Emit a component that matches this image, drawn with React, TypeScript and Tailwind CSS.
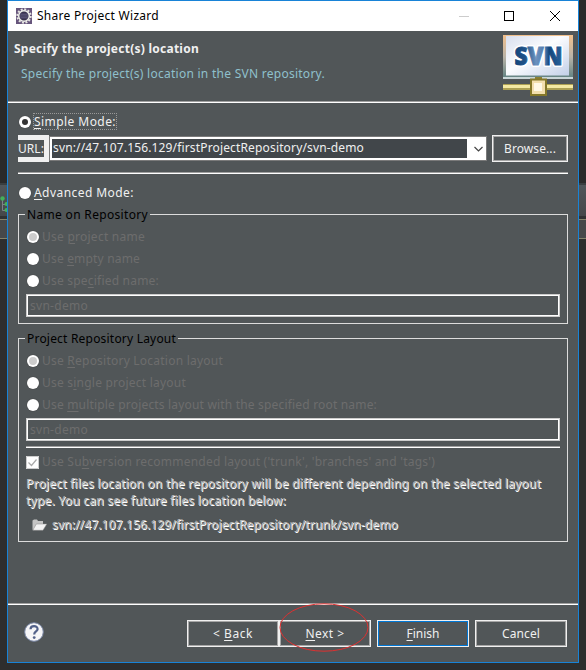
import { useLayoutEffect, useRef, useState } from "react";
import type { ReactNode } from "react";

/* Text run whose tracking is adjusted so that it spans a given width. */
function Fit({ w, className = "", children }: { w: number; className?: string; children: ReactNode }) {
  const ref = useRef<HTMLSpanElement>(null);
  const [tracking, setTracking] = useState(0);
  useLayoutEffect(() => {
    const el = ref.current;
    if (!el) return;
    const chars = (el.textContent ?? "").length;
    setTracking((w - el.getBoundingClientRect().width) / chars);
  }, [w]);
  return (
    <span ref={ref} className={`inline-block whitespace-pre ${className}`} style={{ letterSpacing: tracking }}>
      {children}
    </span>
  );
}

/* Mnemonic letter */
function U({ children }: { children: ReactNode }) {
  return <span className="underline decoration-1 underline-offset-2">{children}</span>;
}

function Rule({ className = "" }: { className?: string }) {
  return <div className={`h-[2px] shrink-0 border-t border-b border-t-[#a0a0a0] border-b-white ${className}`} />;
}

function Radio({ dot = "" }: { dot?: string }) {
  return (
    <span className="flex size-[12px] shrink-0 items-center justify-center rounded-full bg-white shadow-[0_0_1px_#333]">
      {dot && <span className={`rounded-full ${dot}`} />}
    </span>
  );
}

function DisabledRadio({ w, selected, children }: { w: number; selected?: boolean; children: ReactNode }) {
  return (
    <div className="flex h-[22px] items-center gap-[3.5px] pl-[0.5px] text-[#6d6d6d]">
      <Radio dot={selected ? "size-[8px] bg-[#ccc]" : ""} />
      <Fit w={w}>{children}</Fit>
    </div>
  );
}

function DisabledInput() {
  return (
    <div className="flex h-[23px] shrink-0 items-center border border-[#ccc]">
      <div className="flex h-full w-full items-center border border-white pl-[2px] text-[#6d6d6d]">
        <Fit w={58}>svn-demo</Fit>
      </div>
    </div>
  );
}

function Button({ w, className, inner = "border-[#a6a6a6]", children }: { w: number; className: string; inner?: string; children: ReactNode }) {
  return (
    <div className={`h-[27px] shrink-0 border border-[#f0f0f0] ${className}`}>
      <div className={`flex h-full items-center justify-center border ${inner}`}>
        <Fit w={w}>{children}</Fit>
      </div>
    </div>
  );
}

function Gear() {
  return (
    <svg className="size-[16px] shrink-0" viewBox="0 0 16 16">
      <rect width="16" height="16" fill="#66557c" />
      <circle cx="8" cy="8" r="6.700" fill="none" stroke="#e6e6e2" strokeWidth="2" strokeDasharray="2 1.508" />
      <circle cx="8" cy="8" r="5.300" fill="#39324f" stroke="#f0f0ec" strokeWidth="1.500" />
      <path d="M4.300 6.200h7.400M3.800 8h8.400M4.300 9.800h7.400" stroke="#6d6890" strokeWidth=".8" />
    </svg>
  );
}

function SvnLogo() {
  return (
    <svg className="h-[61px] w-[70px]" viewBox="0 0 70 61">
      <defs>
        <linearGradient id="frame" x1="0" y1="0" x2="0" y2="1">
          <stop offset="0" stopColor="#f2c08c" />
          <stop offset=".5" stopColor="#b9b3a8" />
          <stop offset="1" stopColor="#5d8080" />
        </linearGradient>
        <linearGradient id="screen" x1="0" y1="0" x2="1" y2="1">
          <stop offset="0" stopColor="#d9dfee" />
          <stop offset=".45" stopColor="#fbfcfe" />
          <stop offset="1" stopColor="#c3d0e8" />
        </linearGradient>
        <linearGradient id="ink" x1="0" y1="0" x2="1" y2="0">
          <stop offset="0" stopColor="#14467c" />
          <stop offset=".22" stopColor="#1f5288" />
          <stop offset=".45" stopColor="#6c92be" />
          <stop offset=".64" stopColor="#4f79ac" />
          <stop offset=".72" stopColor="#14467c" />
          <stop offset="1" stopColor="#2a639c" />
        </linearGradient>
      </defs>
      <rect width="70" height="44" fill="url(#frame)" />
      <rect x="0" y="42" width="70" height="2" fill="#c9d6d8" />
      <rect x="3" y="1" width="63" height="39.500" fill="url(#screen)" />
      <g fontFamily="Open Sans, Noto Sans, sans-serif" fontWeight="800" fontSize="24">
        <text x="35.500" y="30" textAnchor="middle" textLength="48" lengthAdjust="spacingAndGlyphs" fill="#fff" stroke="#fff" strokeWidth="4" strokeLinejoin="round">SVN</text>
        <text x="35.500" y="30" textAnchor="middle" textLength="48" lengthAdjust="spacingAndGlyphs" fill="url(#ink)" stroke="url(#ink)" strokeWidth=".9">SVN</text>
      </g>
      <rect x="32" y="42" width="7" height="3" fill="#8b8134" />
      <rect x="0" y="49" width="70" height="6" fill="#ada053" />
      <rect x="0" y="50" width="70" height="3" fill="#f5e9a2" />
      <rect x="28" y="44.500" width="15" height="15.500" fill="#f3dfae" stroke="#85782a" strokeWidth="2" />
      <rect x="31" y="48" width="8" height="8" fill="#fff8e6" />
    </svg>
  );
}

const embossed = "text-[#b4b4b4] [text-shadow:1px_1px_0_#fff]";

function EditorStrip({ tree }: { tree?: boolean }) {
  return (
    <div className="flex flex-1 flex-col overflow-hidden">
      <div className="h-[183px] shrink-0 bg-[#2a2a2a]" />
      <div className="h-[2px] shrink-0 bg-[#393e40]" />
      <div className="h-[31px] shrink-0 bg-gradient-to-b from-[#50565a] to-[#45484a]">
        {tree && (
          <svg className="mt-[11px] h-[18px] w-[7px]" viewBox="0 0 7 18">
            <path d="M2.500 3v11.500H7M2.500 8.500H7" fill="none" stroke="#7d8288" />
            <circle cx="2.500" cy="2.500" r="2.200" fill="#43b05a" />
            <circle cx="6.500" cy="8" r="2" fill="#43b05a" />
            <circle cx="6.500" cy="14" r="2" fill="#43b05a" />
          </svg>
        )}
      </div>
      <div className="h-[3px] shrink-0 bg-[#303233]" />
      <div className="h-[20px] shrink-0 border-y border-[#84836b] bg-[#46484a]" />
      <div className="flex-1 bg-[#2e2e2e]" />
    </div>
  );
}

export default function App() {
  return (
    <div className="flex h-[670px] w-[586px] overflow-hidden bg-[#2e2e2e] font-['Noto_Sans','Open_Sans',sans-serif] text-[12px] leading-[16px] text-[#f0f0f0]">
      <div className="flex w-[7px]"><EditorStrip tree /></div>
      <div className="flex h-[663px] w-[572px] shrink-0 flex-col border border-[#1883d7] bg-[#515658]">
        <div className="flex h-[30px] shrink-0 items-center bg-white pl-[8px] text-black">
          <Gear />
          <Fit w={122} className="ml-[5px]">Share Project Wizard</Fit>
          <svg className="ml-auto mr-[16px] h-[12px] w-[104px]" viewBox="0 0 104 12" fill="none">
            <path d="M1 6.500h10" stroke="#ccc" />
            <rect x="46.500" y="1.500" width="9" height="9" stroke="#000" />
            <path d="M92 1l10 10M102 1L92 11" stroke="#000" />
          </svg>
        </div>
        <div className="flex h-[70px] shrink-0 justify-between pr-[5px]">
          <div className="flex flex-col items-start pl-[6px] pt-[10px]">
            <Fit w={185} className="font-bold">Specify the project(s) location</Fit>
            <Fit w={304} className="ml-[7px] mt-[9px] text-[#8fc0cc]">Specify the project(s) location in the SVN repository.</Fit>
          </div>
          <div className="pt-[4px]"><SvnLogo /></div>
        </div>
        <Rule />
        <div className="flex flex-col pl-[10px] pr-[10px] pt-[10px]">
          <div className="flex h-[17px] items-center pl-[0.5px]">
            <Radio dot="size-[6px] bg-[#333]" />
            <div className="ml-[2.5px] flex h-[17px] w-[84px] items-center border border-dotted border-black outline-1 -outline-offset-1 outline-dotted outline-[#999]">
              <Fit w={82}><U>S</U>imple Mode:</Fit>
            </div>
          </div>
          <div className="mt-[5px] flex h-[27px] items-center">
            <div className="flex h-[27px] w-[31px] shrink-0 items-center bg-[#f0f0f0]">
              <div className="flex h-[17px] w-[26px] items-center bg-[#515658]"><Fit w={26}>URL:</Fit></div>
            </div>
            <div className="flex h-[25px] w-[438px] shrink-0 items-center border border-[#7a7a7a] bg-white pl-[2px]">
              <div className="flex h-[19px] w-[415px] items-center bg-[#41464a] pb-[2px] pl-[1px]">
                <Fit w={311}>svn://47.107.156.129/firstProjectRepository/svn-demo</Fit>
              </div>
              <svg className="ml-[6.500px] h-[6px] w-[9px]" viewBox="0 0 9 6"><path d="M.5 1l4 4 4-4" fill="none" stroke="#444" strokeWidth="1.200" /></svg>
            </div>
            <Button w={52} className="ml-[5px] w-[76px]">Browse...</Button>
          </div>
          <Rule className="mt-[10px]" />
          <div className="mt-[10px] flex h-[17px] items-center gap-[3.5px] pl-[0.5px]">
            <Radio />
            <Fit w={100}><U>A</U>dvanced Mode:</Fit>
          </div>
          <fieldset className="relative mt-[13px] h-[110px] border border-[#dcdcdc] px-[7px] pt-[11px]">
            <div className="absolute -top-[8px] left-[6px] bg-[#515658] pl-[2px] pr-[2px] text-black"><Fit w={121}>Name on Repository</Fit></div>
            <DisabledRadio w={103} selected>Use <U>p</U>roject name</DisabledRadio>
            <DisabledRadio w={98}>Use <U>e</U>mpty name</DisabledRadio>
            <DisabledRadio w={117}>Use spe<U>c</U>ified name:</DisabledRadio>
            <div className="h-[2px]" />
            <DisabledInput />
          </fieldset>
          <fieldset className="relative mt-[14px] h-[204px] border border-[#dcdcdc] px-[7px] pt-[11px]">
            <div className="absolute -top-[8px] left-[6px] bg-[#515658] pl-[2px] pr-[2px] text-black"><Fit w={149}>Project Repository Layout</Fit></div>
            <DisabledRadio w={181} selected>Use <U>R</U>epository Location layout</DisabledRadio>
            <DisabledRadio w={144}>Use s<U>i</U>ngle project layout</DisabledRadio>
            <DisabledRadio w={335}>Use <U>m</U>ultiple projects layout with the specified root name:</DisabledRadio>
            <div className="h-[2px]" />
            <DisabledInput />
            <Rule className="mt-[5px]" />
            <div className="mt-[6px] flex h-[16px] items-center gap-[3px] text-[#6d6d6d]">
              <svg className="size-[13px]" viewBox="0 0 13 13"><path d="M0 0h13v13H0z" fill="#fff" /><path d="M.5.5h12v12H.5z" fill="none" stroke="#ccc" /><path d="M2.500 6.500l3 3 5-6" fill="none" stroke="#aaa" strokeWidth="1.200" /></svg>
              <Fit w={393}>Use Su<U>b</U>version recommended layout ('trunk', 'branches' and 'tags')</Fit>
            </div>
            <div className={`mt-[5px] flex flex-col items-start leading-[17px] ${embossed}`}>
              <Fit w={515}>Project files location on the repository will be different depending on the selected layout</Fit>
              <Fit w={260}>type. You can see future files location below:</Fit>
            </div>
            <div className="mt-[7px] flex h-[18px] items-center gap-[5px] pl-[6px]">
              <svg className="h-[12px] w-[15px]" viewBox="0 0 15 12">
                <path d="M.5 11V1.500L2 .5h3l1 1.500h5V5" fill="#c4c4c4" />
                <path d="M.8 11.300L4.300 5H14.800L11 11.300z" fill="#f2f2f2" stroke="#888" strokeWidth=".5" />
              </svg>
              <Fit w={346} className={embossed}>svn://47.107.156.129/firstProjectRepository/trunk/svn-demo</Fit>
            </div>
          </fieldset>
        </div>
        <div className="flex-1" />
        <Rule />
        <div className="relative flex h-[57px] shrink-0 items-start pl-[16px] pt-[15px]">
          <svg className="mt-[2px] size-[20px]" viewBox="0 0 20 20">
            <circle cx="10" cy="10" r="9.300" fill="#f5f5f7" stroke="#7583a3" />
            <path d="M6.500 7.300C6.500 3 13.700 3.100 13.600 7.100C13.500 9.500 10.200 9.500 10.200 12.500" fill="none" stroke="#53628a" strokeWidth="2.200" />
            <circle cx="10.200" cy="15.600" r="1.400" fill="#53628a" />
          </svg>
          <Button w={40} className="ml-[143px] w-[92px]">{"< "}<U>B</U>ack</Button>
          <Button w={39} className="w-[92px]"><U>N</U>ext {">"}</Button>
          <Button w={33} className="ml-[6px] w-[92px]" inner="border-[#0078d7]"><U>F</U>inish</Button>
          <Button w={38} className="ml-[6px] w-[92px]">Cancel</Button>
          <svg className="absolute -top-[3px] left-[270px] h-[51px] w-[92px]" viewBox="0 0 92 51">
            <ellipse cx="46" cy="25.500" rx="44" ry="23.700" fill="none" stroke="#e03030" />
          </svg>
        </div>
      </div>
      <div className="flex w-[7px]"><EditorStrip /></div>
    </div>
  );
}
